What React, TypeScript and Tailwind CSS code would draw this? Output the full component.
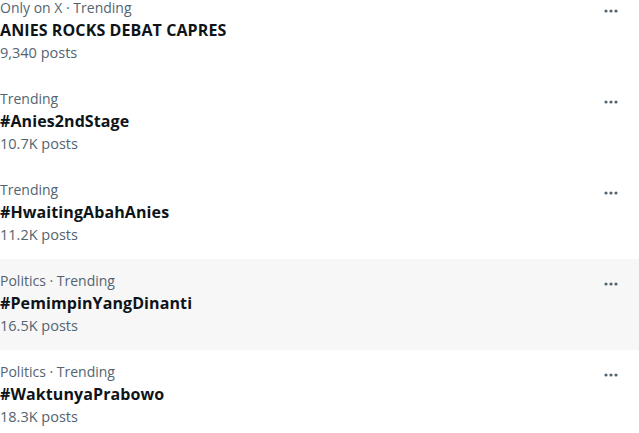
import React from "react";

type Trend = {
  context: string;
  title: string;
  posts: string;
  active?: boolean;
};

const trends: Trend[] = [
  { context: "Only on X · Trending", title: "ANIES ROCKS DEBAT CAPRES", posts: "9,340 posts" },
  { context: "Trending", title: "#Anies2ndStage", posts: "10.7K posts" },
  { context: "Trending", title: "#HwaitingAbahAnies", posts: "11.2K posts" },
  { context: "Politics · Trending", title: "#PemimpinYangDinanti", posts: "16.5K posts", active: true },
  { context: "Politics · Trending", title: "#WaktunyaPrabowo", posts: "18.3K posts" },
];

const Dots: React.FC = () => (
  <svg width="14" height="4" viewBox="0 0 14 4" className="fill-[#536471]">
    <circle cx="2" cy="2" r="1.6" />
    <circle cx="7" cy="2" r="1.6" />
    <circle cx="12" cy="2" r="1.6" />
  </svg>
);

const App: React.FC = () => {
  return (
    <div className="w-[639px] h-[433px] overflow-hidden bg-white font-['Open_Sans',sans-serif]">
      <div className="-mt-[14px]">
        {trends.map((t) => (
          <div
            key={t.title}
            className={`flex h-[91px] pt-[12px] ${t.active ? "bg-[#f7f7f7]" : "bg-white"}`}
          >
            <div className="flex-1 flex flex-col">
              <span className="text-[14px] leading-[20px] text-[#536471]">{t.context}</span>
              <span className="text-[16px] leading-[22px] font-bold text-[#0f1419] mt-[1px] tracking-[0.1px]">{t.title}</span>
              <span className="text-[14.5px] leading-[20px] text-[#536471] mt-[2px]">{t.posts}</span>
            </div>
            <div className="w-[14px] mr-[21px] pt-[11px]">
              <Dots />
            </div>
          </div>
        ))}
      </div>
    </div>
  );
};

export default App;
